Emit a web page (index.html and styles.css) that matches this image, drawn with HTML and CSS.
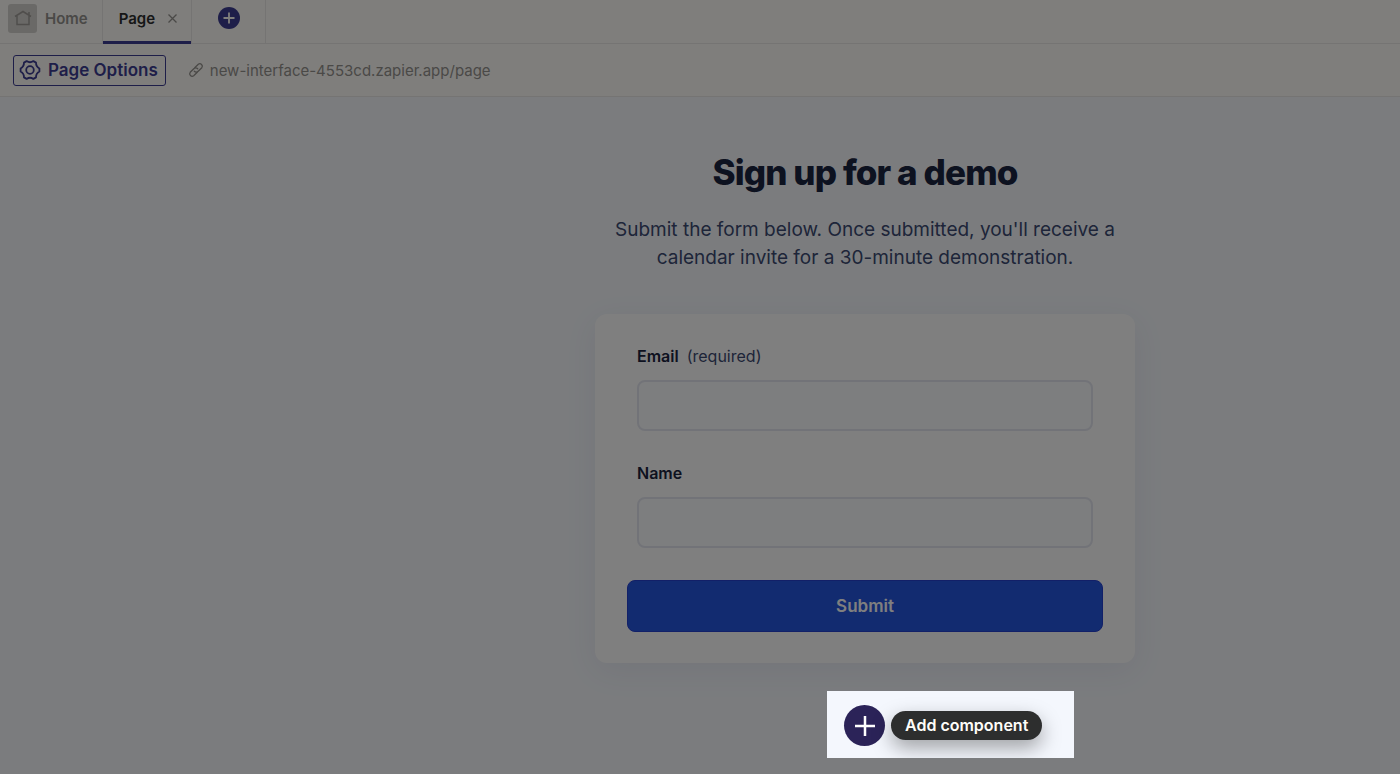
FILE: index.html
```html
<!DOCTYPE html>
<html lang="en">
<head>
    <meta charset="utf-8">
    <title>Sign up for a demo</title>
    <link rel="stylesheet" href="styles.css">
</head>
<body>
    <nav class="tabs">
        <a class="tab tab-home" href="#">
            <span class="home-icon">
                <svg width="18" height="16" viewBox="0 0 18 16" fill="none" stroke="currentColor" stroke-width="1.5">
                    <path d="M1 6.5 9 1.500l8 5M3 5.5V14.500h12V5.500M15 2v3"/>
                </svg>
            </span>
            Home
        </a>
        <div class="tab tab-page">
            <a href="#">Page</a>
            <button class="close" aria-label="Close tab">
                <svg width="9" height="9" viewBox="0 0 9 9" stroke="currentColor" stroke-width="1.3">
                    <path d="M.5 .5l8 8M8.500 .5l-8 8"/>
                </svg>
            </button>
        </div>
        <div class="tab tab-new">
            <button class="new-tab" aria-label="New tab">
                <svg width="12" height="12" viewBox="0 0 12 12" stroke="currentColor" stroke-width="1.8">
                    <path d="M6 .5v11M.5 6h11"/>
                </svg>
            </button>
        </div>
    </nav>

    <div class="toolbar">
        <button class="options">
            <svg width="22" height="22" viewBox="0 0 22 22" fill="none" stroke="currentColor" stroke-width="1.8" stroke-linejoin="round">
                <path d="M20.400 12.500Q16.900 14.400 17 18.400L14.400 19.900Q11 17.600 7.600 19.900L5 18.400Q5.100 14.400 1.600 12.500V9.500Q5.100 7.600 5 3.600L7.600 2.100Q11 4.400 14.400 2.100L17 3.600Q16.900 7.600 20.400 9.500Z"/>
                <circle cx="11" cy="11" r="3.8"/>
            </svg>
            Page Options
        </button>
        <a class="url" href="#">
            <svg width="16" height="16" viewBox="0 0 16 16" fill="none" stroke="currentColor" stroke-width="1.3" stroke-linecap="round">
                <path d="M6.300 9.300a2.700 2.700 0 0 0 3.900 0l3.600-3.600a2.500 2.500 0 0 0-3.500-3.500L6.700 5.800M9.700 6.700a2.700 2.700 0 0 0-3.900 0l-3.600 3.600a2.500 2.500 0 0 0 3.500 3.500l3.600-3.600"/>
            </svg>
            new-interface-4553cd.zapier.app/page
        </a>
    </div>

    <main class="canvas">
        <h1>Sign up for a demo</h1>
        <p class="intro">Submit the form below. Once submitted, you'll receive a calendar invite for a 30-minute demonstration.</p>

        <form class="card">
            <div class="field">
                <label for="email">Email <span class="required">(required)</span></label>
                <input type="email" id="email" name="email" required>
            </div>
            <div class="field">
                <label for="name">Name</label>
                <input type="text" id="name" name="name">
            </div>
            <button type="submit" class="submit">Submit</button>
        </form>

        <div class="spotlight">
            <button class="add" aria-label="Add component">
                <svg width="22" height="22" viewBox="0 0 22 22" stroke="currentColor" stroke-width="2.500">
                    <path d="M11 1v20M1 11h20"/>
                </svg>
            </button>
            <span class="tooltip">Add component</span>
        </div>
    </main>
</body>
</html>
```

FILE: styles.css
```css
* {
    box-sizing: border-box;
}

body {
    margin: 0;
    min-height: 100vh;
    display: flex;
    flex-direction: column;
    overflow: hidden;
    background-color: #f6f9fd;
    font-family: Inter, "Liberation Sans", sans-serif;
    color: #1b2440;
}

a {
    color: inherit;
    text-decoration: none;
}

button {
    font-family: inherit;
    cursor: pointer;
}

svg {
    display: block;
    flex: none;
}

.tabs {
    display: flex;
    height: 44px;
    background-color: #fffdf9;
    border-bottom: 1px solid #ebe9e6;
    font-size: 15px;
    font-weight: 600;
}

.tab {
    display: flex;
    align-items: center;
    height: 44px;
    padding-bottom: 8px;
    border-right: 1px solid #ebe9e6;
}

.tab-home {
    gap: 8px;
    padding-left: 8px;
    padding-right: 14px;
    color: #95928e;
}

.home-icon {
    display: flex;
    align-items: center;
    justify-content: center;
    width: 29px;
    height: 29px;
    border-radius: 3px;
    background-color: #d5d3ce;
    color: #a09d99;
}

.tab-page {
    gap: 13px;
    padding-left: 16px;
    padding-right: 14px;
    color: #2d2e2e;
    box-shadow: inset 0 -3px #3d3d92;
}

.close {
    padding: 0;
    border: 0;
    background: none;
    color: #95928e;
}

.tab-new {
    justify-content: center;
    width: 74px;
}

.new-tab {
    display: flex;
    align-items: center;
    justify-content: center;
    width: 22px;
    height: 22px;
    padding: 0;
    border: 0;
    border-radius: 50%;
    background-color: #3d3d92;
    color: #fffdf9;
}

.toolbar {
    display: flex;
    align-items: center;
    gap: 22px;
    height: 53px;
    padding-left: 13px;
    background-color: #fffdf9;
    border-bottom: 1px solid #ebe9e6;
}

.options {
    display: flex;
    align-items: center;
    gap: 7px;
    height: 31px;
    padding: 0 7px 0 5px;
    border: 1px solid #3d3d92;
    border-radius: 3px;
    background: none;
    color: #3d3d92;
    font-size: 17px;
    font-weight: 600;
}

.url {
    display: flex;
    align-items: center;
    gap: 6px;
    color: #95928e;
    font-size: 15px;
}

.canvas {
    display: flex;
    flex-direction: column;
    align-items: center;
    padding-top: 50px;
    padding-left: 330px;
}

h1 {
    margin: 0;
    font-size: 35px;
    line-height: 50px;
    font-weight: 800;
    letter-spacing: -0.025em;
}

.intro {
    max-width: 540px;
    margin: 19px 0 42px;
    padding: 0 16px;
    color: #3c4a72;
    font-size: 19px;
    line-height: 28px;
    text-align: center;
}

.card {
    display: flex;
    flex-direction: column;
    gap: 32px;
    width: 100%;
    max-width: 540px;
    padding: 32px 32px 31px;
    border-radius: 12px;
    background-color: #fff;
    box-shadow: 0 8px 32px rgba(60, 70, 140, 0.08);
}

.field {
    display: flex;
    flex-direction: column;
    gap: 14px;
    padding: 0 10px;
}

label {
    font-size: 16px;
    line-height: 20px;
    font-weight: 600;
}

.required {
    margin-left: 4px;
    color: #3c4a72;
    font-weight: 400;
}

.field input {
    width: 100%;
    height: 51px;
    padding: 0 16px;
    border: 2px solid #e5e7f0;
    border-radius: 8px;
    background-color: #fafcff;
    font: inherit;
}

.submit {
    height: 52px;
    border: 1px solid #2440d0;
    border-radius: 8px;
    background-color: #2456e0;
    color: #fff;
    font-size: 17px;
    font-weight: 600;
}

/* the spread shadow dims everything outside the highlighted box */
.spotlight {
    position: relative;
    z-index: 1;
    display: flex;
    align-items: center;
    gap: 6px;
    width: 247px;
    height: 67px;
    margin: 28px 0 0 171px;
    padding: 2px 0 0 17px;
    overflow: hidden;
    background-color: #f4f7fd;
    box-shadow: 0 0 0 200vmax rgba(0, 0, 0, 0.5);
}

.add {
    display: flex;
    align-items: center;
    justify-content: center;
    width: 41px;
    height: 41px;
    padding: 0;
    border: 0;
    border-radius: 50%;
    background-color: #2b2358;
    color: #fff;
}

.tooltip {
    padding: 0 14px;
    border-radius: 15px;
    background-color: #2d2e2e;
    box-shadow: 0 8px 20px rgba(0, 0, 0, 0.35);
    color: #fffdf9;
    font-size: 16px;
    line-height: 29px;
    font-weight: 600;
}
```
